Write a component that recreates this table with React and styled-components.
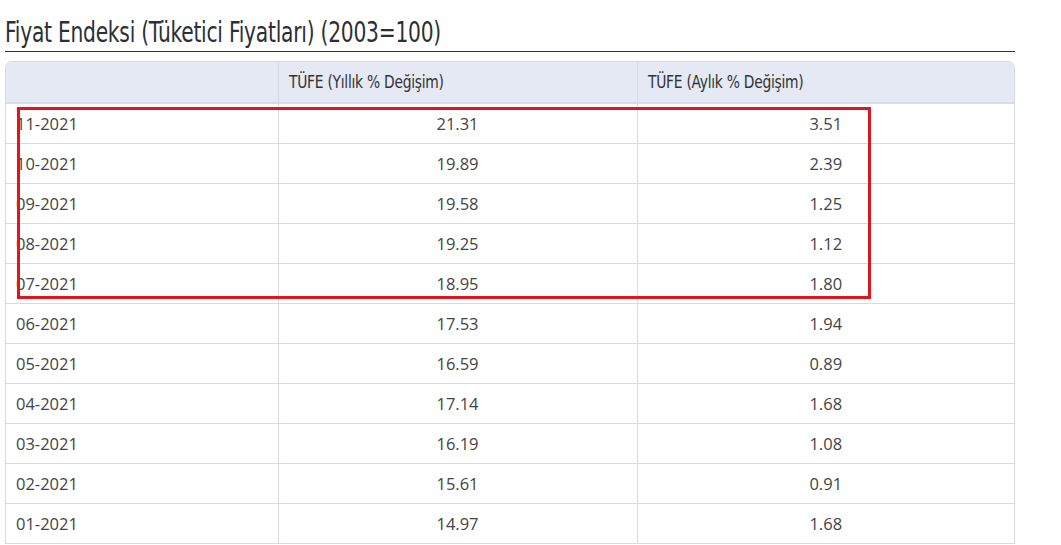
import styled, { createGlobalStyle } from "styled-components";

const rows = [
  ["11-2021", "21.31", "3.51"],
  ["10-2021", "19.89", "2.39"],
  ["09-2021", "19.58", "1.25"],
  ["08-2021", "19.25", "1.12"],
  ["07-2021", "18.95", "1.80"],
  ["06-2021", "17.53", "1.94"],
  ["05-2021", "16.59", "0.89"],
  ["04-2021", "17.14", "1.68"],
  ["03-2021", "16.19", "1.08"],
  ["02-2021", "15.61", "0.91"],
  ["01-2021", "14.97", "1.68"],
];

const Global = createGlobalStyle`
body {
  margin: 0;
  background: #fff;
  font-family: 'Open Sans', sans-serif;
  overflow: hidden;
}
`

const Page = styled.div`
width: 1010px;
padding-left: 5px;
position: relative;
`
const Title = styled.h2`
margin: 0;
padding-top: 13px;
height: 38px;
border-bottom: 1px solid #333;
white-space: nowrap;
`
const TitleText = styled.span`
display: inline-block;
font-family: 'DejaVu Sans', sans-serif;
font-stretch: condensed;
font-weight: 400;
font-size: 29px;
letter-spacing: -0.3px;
line-height: 38px;
color: #2b2f36;
transform: scaleX(0.775);
transform-origin: left center;
`
const TableWrap = styled.div`
margin-top: 9px;
border: 1px solid #d5dae3;
border-bottom: none;
border-radius: 7px 7px 0 0;
overflow: hidden;
width: 1008px;
`
const Table = styled.table`
width: 100%;
border-collapse: collapse;
table-layout: fixed;
`
const Th = styled.th`
height: 40px;
padding: 0 10px;
text-align: left;
font-weight: 400;
background: #e4e9f4;
border-bottom: 2px solid #d8dbe0;
border-left: ${p => (p.$first ? "none" : "1px solid #d5dae3")};
white-space: nowrap;
`
const HeadText = styled.span`
display: inline-block;
font-family: 'DejaVu Sans', sans-serif;
font-stretch: condensed;
font-size: 17.5px;
letter-spacing: -0.3px;
color: #333;
transform: scaleX(0.88);
transform-origin: left center;
`
const Td = styled.td`
height: 39px;
padding: 0 10px;
font-size: 16.5px;
color: #444;
text-align: ${p => p.$align || "center"};
border-bottom: 1px solid #d5dae3;
border-left: ${p => (p.$first ? "none" : "1px solid #d5dae3")};
`
const Highlight = styled.div`
position: absolute;
left: 17px;
top: 107px;
width: 848px;
height: 186px;
border: 3px solid #e3141b;
pointer-events: none;
`

export default function App() {
  return (
    <Page>
      <Global />
      <Title>
        <TitleText>Fiyat Endeksi (Tüketici Fiyatları) (2003=100)</TitleText>
      </Title>
      <TableWrap>
        <Table>
          <colgroup>
            <col style={{ width: "272px" }} />
            <col style={{ width: "359px" }} />
            <col />
          </colgroup>
          <thead>
            <tr>
              <Th $first></Th>
              <Th><HeadText>TÜFE (Yıllık % Değişim)</HeadText></Th>
              <Th><HeadText>TÜFE (Aylık % Değişim)</HeadText></Th>
            </tr>
          </thead>
          <tbody>
            {rows.map(r => (
              <tr key={r[0]}>
                <Td $first $align="left">{r[0]}</Td>
                <Td>{r[1]}</Td>
                <Td>{r[2]}</Td>
              </tr>
            ))}
          </tbody>
        </Table>
      </TableWrap>
      <Highlight />
    </Page>
  );
}
